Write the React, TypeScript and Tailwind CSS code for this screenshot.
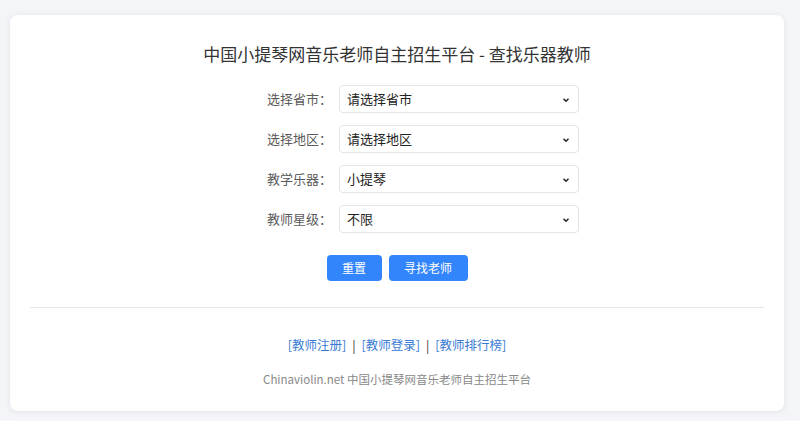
import React from 'react';

const font = { fontFamily: '"Noto Sans CJK SC", "Noto Sans", sans-serif' };

const rows = [
  { label: '选择省市：', value: '请选择省市' },
  { label: '选择地区：', value: '请选择地区' },
  { label: '教学乐器：', value: '小提琴' },
  { label: '教师星级：', value: '不限' },
];

function Chevron() {
  return (
    <svg width="10" height="10" viewBox="0 0 10 10" className="absolute right-[7px] top-[9px]">
      <path d="M2.5 3.8 L5 6.3 L7.5 3.8" fill="none" stroke="#222" strokeWidth="1.5" />
    </svg>
  );
}

export default function App() {
  return (
    <div className="min-h-[421px] w-[800px] bg-[#f4f5f9] pt-[15px] pl-[10px]" style={font}>
      <div className="w-[774px] rounded-lg bg-white px-5 pt-[27px] pb-[22px] shadow-[0_1px_6px_rgba(0,0,0,0.08)]">
        <h1 className="text-center text-[17px] leading-6 text-[#333]">
          中国小提琴网音乐老师自主招生平台 - 查找乐器教师
        </h1>

        <div className="mt-[19px] ml-[237px] flex flex-col gap-3">
          {rows.map((r) => (
            <div key={r.label} className="flex items-center">
              <span className="w-[72px] shrink-0 text-[13px] text-[#5a5a5a]">{r.label}</span>
              <div className="relative h-[28px] w-[240px] rounded border border-[#e3e5e8] bg-white">
                <span className="block pl-[7px] text-[13px] leading-[26px] text-[#222]">{r.value}</span>
                <Chevron />
              </div>
            </div>
          ))}
        </div>

        <div className="mt-[22px] flex justify-center gap-[7px]">
          <button className="h-[26px] w-[55px] rounded bg-[#3385fc] text-[12px] text-white">重置</button>
          <button className="h-[26px] w-[79px] rounded bg-[#3385fc] text-[12px] text-white">寻找老师</button>
        </div>

        <div className="mt-[26px] h-px bg-[#e6e7ea]" />

        <div className="mt-[27px] text-center text-[12.5px] leading-5 text-[#333]">
          <a className="text-[#3a7bd5]">[教师注册]</a>
          <span className="mx-[6px]">|</span>
          <a className="text-[#3a7bd5]">[教师登录]</a>
          <span className="mx-[6px]">|</span>
          <a className="text-[#3a7bd5]">[教师排行榜]</a>
        </div>

        <div className="mt-[14px] text-center text-[11.5px] leading-5 text-[#888]">
          Chinaviolin.net 中国小提琴网音乐老师自主招生平台
        </div>
      </div>
    </div>
  );
}
